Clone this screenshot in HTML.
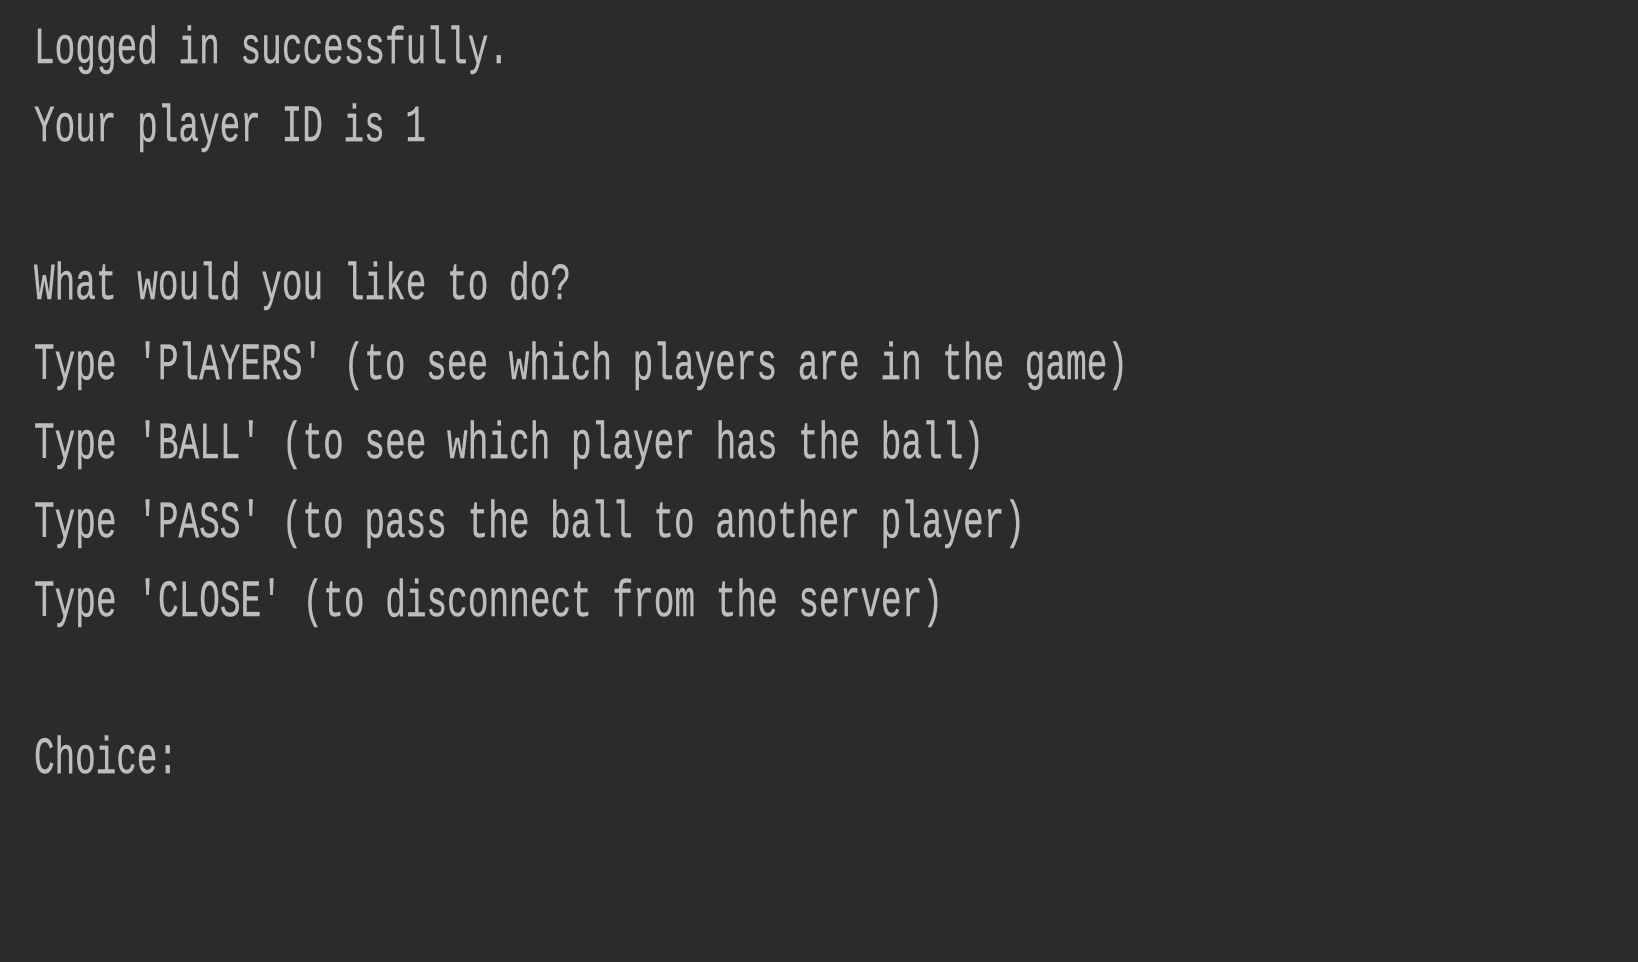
<!DOCTYPE html>
<html><head><meta charset="utf-8"><style>
html,body{margin:0;padding:0;background:#2b2b2b;width:1638px;height:962px;overflow:hidden}
svg{display:block}
text{font-family:"Liberation Mono",monospace;font-size:34.4px;fill:#bdbdbd;stroke:#bdbdbd;stroke-width:0.3px}
</style></head><body>
<svg width="1638" height="962" xmlns="http://www.w3.org/2000/svg">
<rect width="1638" height="962" fill="#2b2b2b"/>
<g xml:space="preserve">
<text transform="translate(34,63) scale(1,1.5)" textLength="475" lengthAdjust="spacing">Logged in successfully.</text>
<text transform="translate(34,141) scale(1,1.5)" textLength="392" lengthAdjust="spacing">Your player ID is 1</text>
<text transform="translate(34,299) scale(1,1.5)" textLength="537" lengthAdjust="spacing">What would you like to do?</text>
<text transform="translate(34,379) scale(1,1.5)" textLength="1094" lengthAdjust="spacing">Type 'PlAYERS' (to see which players are in the game)</text>
<text transform="translate(34,458) scale(1,1.5)" textLength="950" lengthAdjust="spacing">Type 'BALL' (to see which player has the ball)</text>
<text transform="translate(34,537) scale(1,1.5)" textLength="991" lengthAdjust="spacing">Type 'PASS' (to pass the ball to another player)</text>
<text transform="translate(34,616) scale(1,1.5)" textLength="909" lengthAdjust="spacing">Type 'CLOSE' (to disconnect from the server)</text>
<text transform="translate(34,773) scale(1,1.5)" textLength="144" lengthAdjust="spacing">Choice:</text>
</g>
</svg>
</body></html>
